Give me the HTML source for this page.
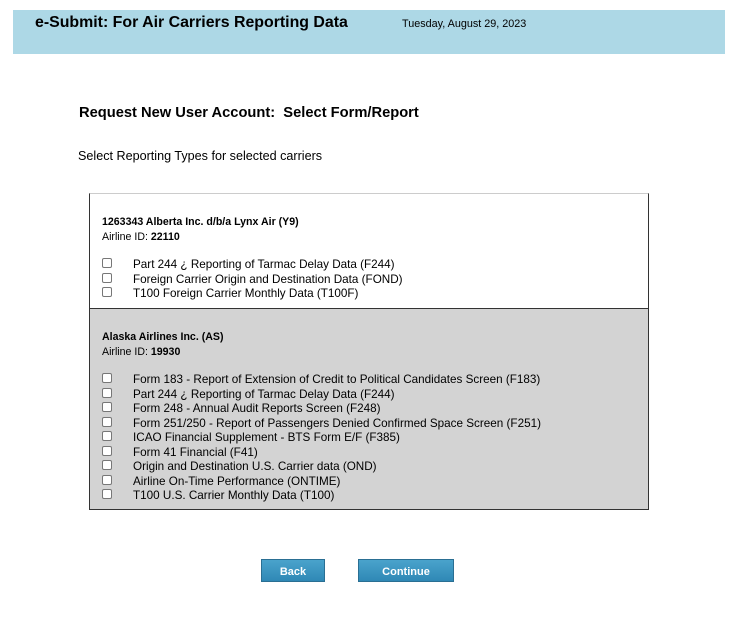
<!DOCTYPE html>
<html><head><style>
body{margin:0;background:#fff;font-family:"Liberation Sans",Arial,sans-serif;width:750px;height:625px;position:relative;overflow:hidden}
.hdr{position:absolute;left:13px;top:10px;width:712px;height:44px;background:#add8e6}
.t{position:absolute;left:22px;top:4px;font-size:15.9px;font-weight:bold;color:#000}
.d{position:absolute;left:389px;top:8px;font-size:10.8px}
.h{position:absolute;left:79px;top:105px;font-size:14.7px;font-weight:bold}
.s{position:absolute;left:78px;top:149px;font-size:12.6px}
.box{position:absolute;left:89px;top:193px;width:558px;height:315px;border:1px solid #333;border-top-color:#ccc}
.sec1{position:absolute;left:0;top:0;width:558px;height:114px;background:#fff;border-bottom:1px solid #333}
.sec2{position:absolute;left:0;top:115px;width:558px;height:200px;background:#d3d3d3}
.n{position:absolute;left:12px;font-size:10.6px;font-weight:bold}
.id{position:absolute;left:12px;font-size:10.6px}
.r{position:absolute;left:12px;font-size:11.7px;height:14px;line-height:14px}
.cb{position:absolute;left:0;top:0px;width:8px;height:8px;border:1px solid #777;border-radius:2px;background:#fff}
.r span{position:absolute;left:31px;white-space:nowrap}
.btn{position:absolute;top:559px;height:23px;background:linear-gradient(#4aa3cc,#2f88b5);border:1px solid #2a6f93;color:#fff;font-size:11px;font-weight:bold;text-align:center;line-height:25px;box-sizing:border-box}
</style></head><body>
<div class="hdr"><div class="t">e-Submit: For Air Carriers Reporting Data</div><div class="d">Tuesday, August 29, 2023</div></div>
<div class="h">Request New User Account:&nbsp; Select Form/Report</div>
<div class="s">Select Reporting Types for selected carriers</div>
<div class="box">
<div class="sec1">
<div class="n" style="top:22px">1263343 Alberta Inc. d/b/a Lynx Air (Y9)</div>
<div class="id" style="top:37px">Airline ID: <b>22110</b></div>
<div class="r" style="top:64px"><div class="cb"></div><span>Part 244 ¿ Reporting of Tarmac Delay Data (F244)</span></div>
<div class="r" style="top:79px"><div class="cb"></div><span>Foreign Carrier Origin and Destination Data (FOND)</span></div>
<div class="r" style="top:93px"><div class="cb"></div><span>T100 Foreign Carrier Monthly Data (T100F)</span></div>
</div>
<div class="sec2">
<div class="n" style="top:22px">Alaska Airlines Inc. (AS)</div>
<div class="id" style="top:37px">Airline ID: <b>19930</b></div>
<div class="r" style="top:64px"><div class="cb"></div><span>Form 183 - Report of Extension of Credit to Political Candidates Screen (F183)</span></div>
<div class="r" style="top:78.5px"><div class="cb"></div><span>Part 244 ¿ Reporting of Tarmac Delay Data (F244)</span></div>
<div class="r" style="top:93px"><div class="cb"></div><span>Form 248 - Annual Audit Reports Screen (F248)</span></div>
<div class="r" style="top:107.5px"><div class="cb"></div><span>Form 251/250 - Report of Passengers Denied Confirmed Space Screen (F251)</span></div>
<div class="r" style="top:122px"><div class="cb"></div><span>ICAO Financial Supplement - BTS Form E/F (F385)</span></div>
<div class="r" style="top:136.5px"><div class="cb"></div><span>Form 41 Financial (F41)</span></div>
<div class="r" style="top:151px"><div class="cb"></div><span>Origin and Destination U.S. Carrier data (OND)</span></div>
<div class="r" style="top:165.5px"><div class="cb"></div><span>Airline On-Time Performance (ONTIME)</span></div>
<div class="r" style="top:180px"><div class="cb"></div><span>T100 U.S. Carrier Monthly Data (T100)</span></div>
</div>
</div>
<div class="btn" style="left:261px;width:64px">Back</div>
<div class="btn" style="left:358px;width:96px">Continue</div>
</body></html>
